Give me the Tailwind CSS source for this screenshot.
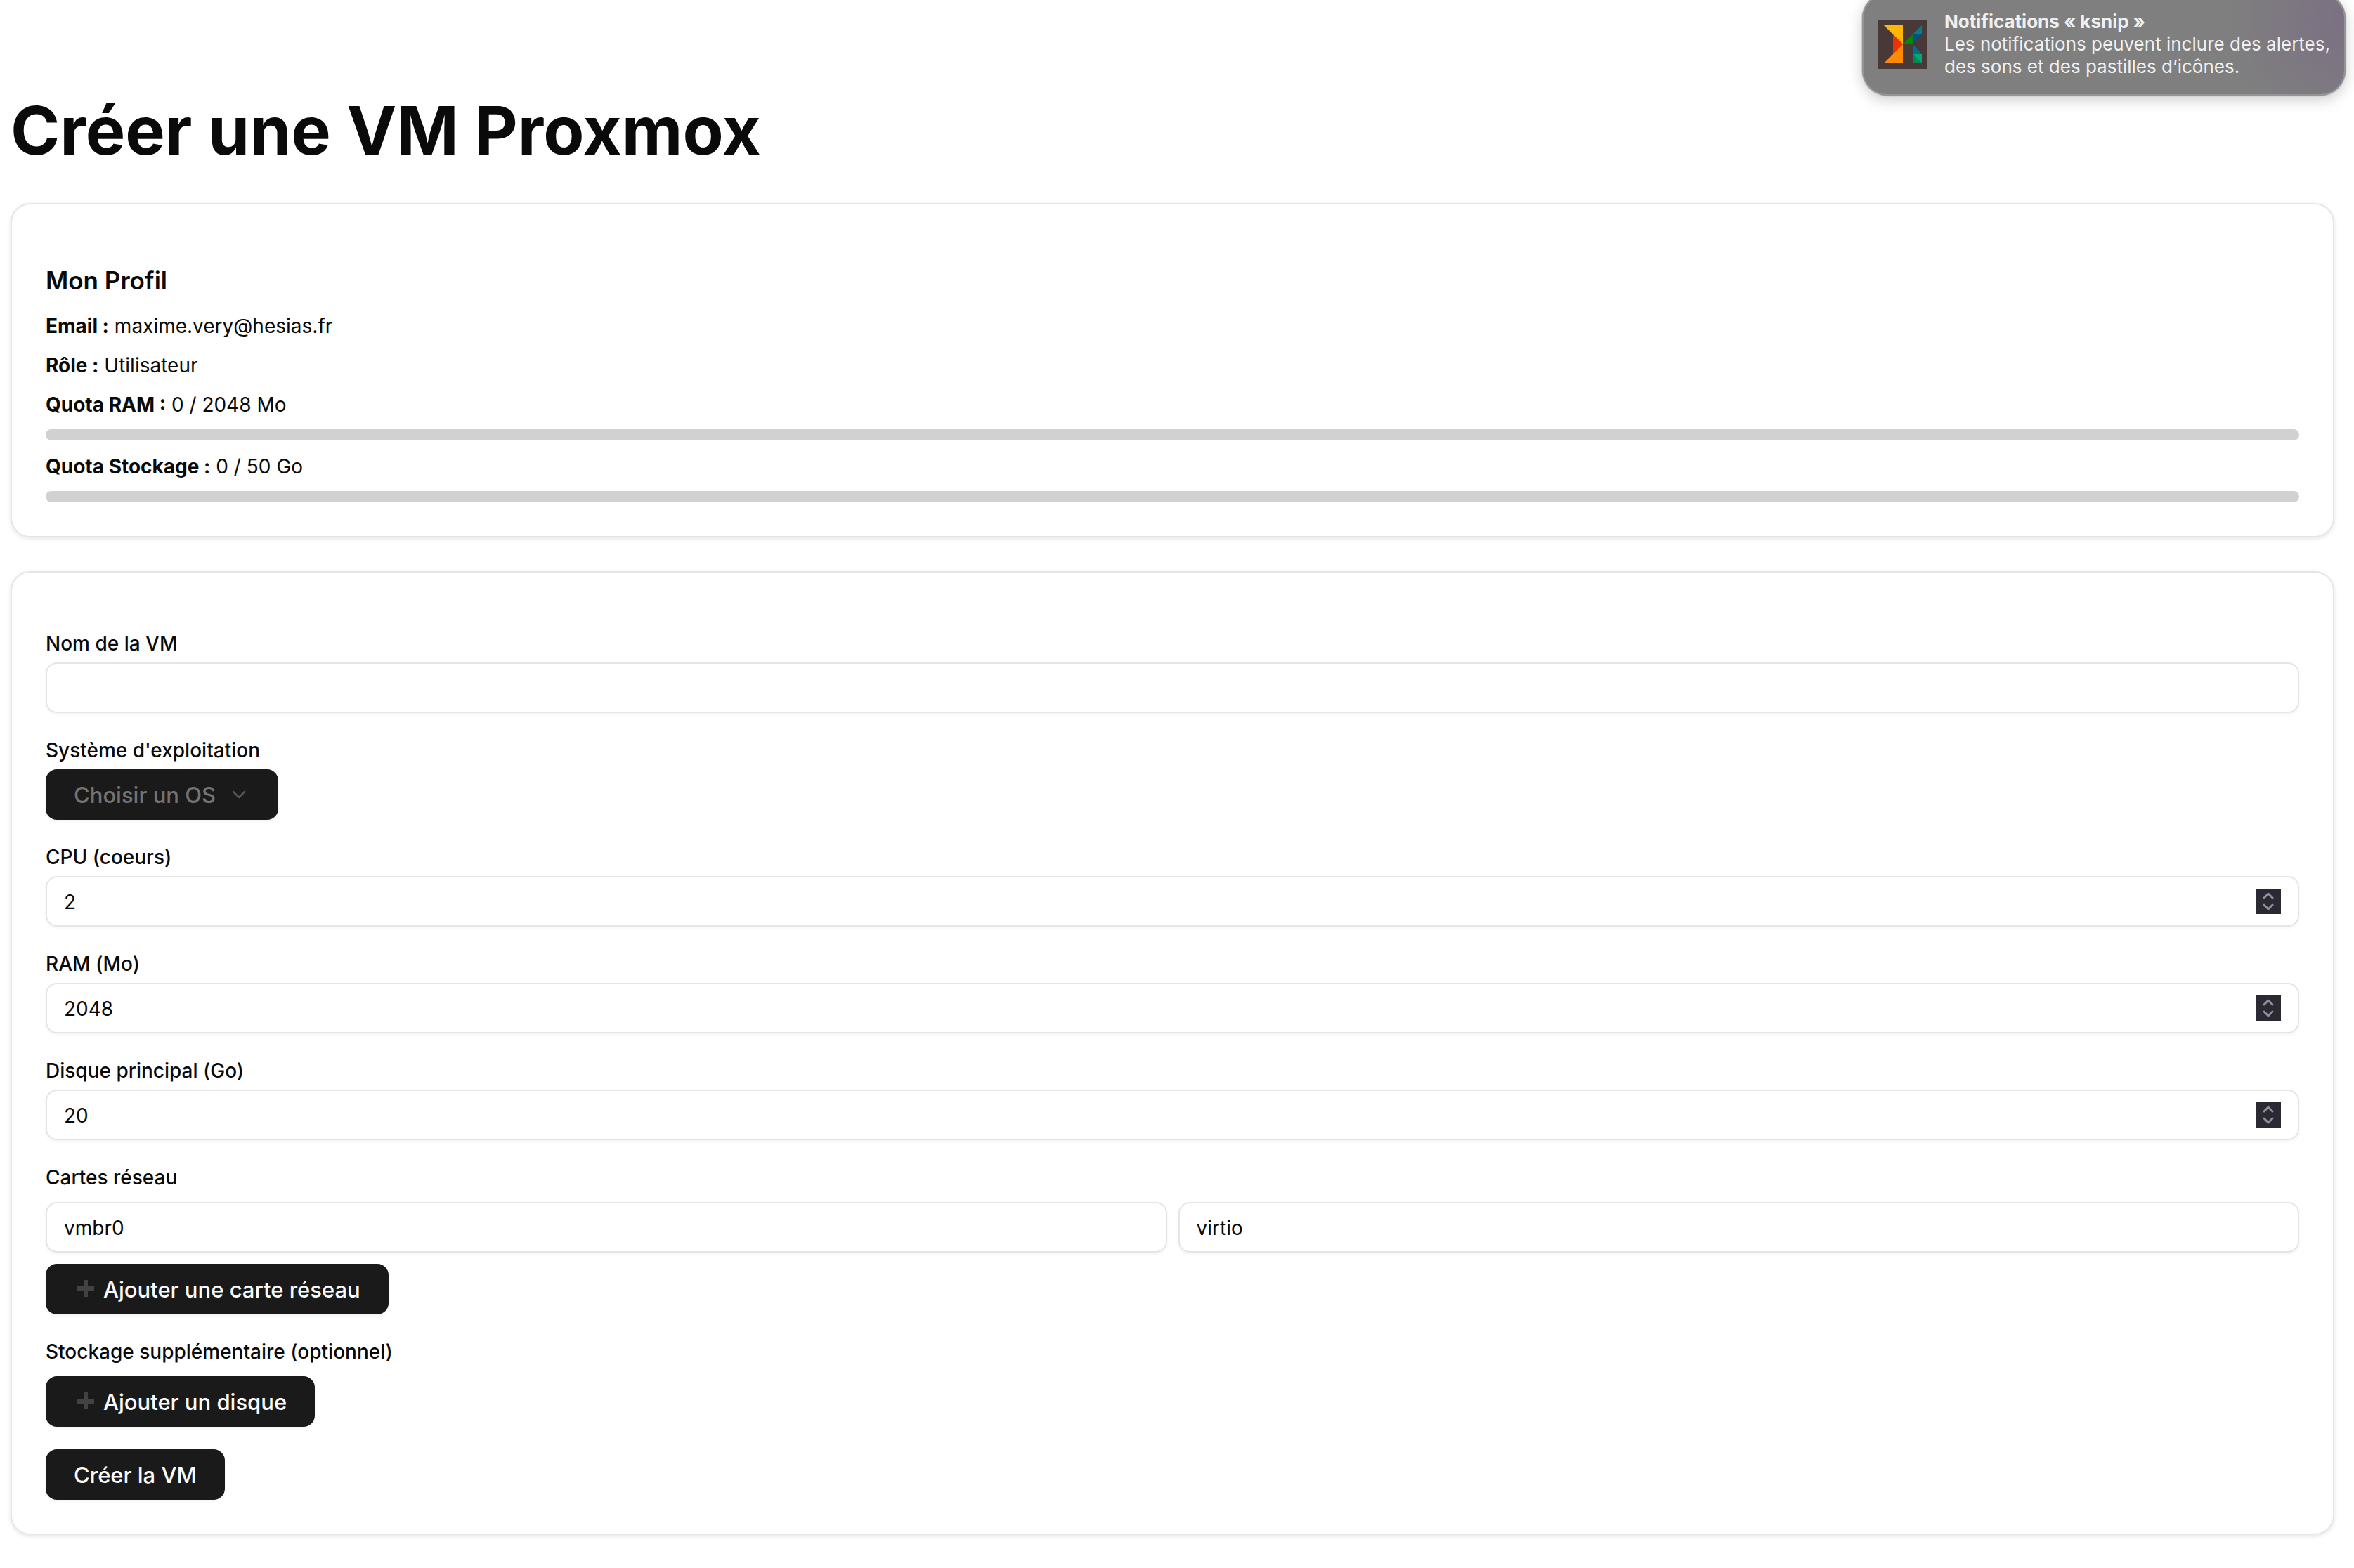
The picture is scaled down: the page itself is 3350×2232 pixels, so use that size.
<!DOCTYPE html>
<html lang="fr">
<head>
<meta charset="utf-8">
<meta name="viewport" content="width=device-width, initial-scale=1">
<title>Créer une VM Proxmox</title>
<script src="https://cdn.jsdelivr.net/npm/@tailwindcss/browser@4"></script>
</head>
<body class="bg-white font-[Inter,sans-serif] text-[28px] leading-[38px] text-neutral-950">

<!-- System notification -->
<aside class="absolute -top-2.5 right-3 flex h-[146px] w-[688px] items-center gap-6 rounded-[36px] border-2 border-[#949494] bg-[#7f7f7f] bg-[radial-gradient(circle_at_100%_25%,#7b7083,#7f7f7f_170px)] pl-[21px] shadow-[0_0_2px_rgba(0,0,0,0.5),0_6px_20px_rgba(0,0,0,0.2)]">
  <svg class="size-[70px] shrink-0" viewBox="0 0 70 70" aria-hidden="true">
    <rect width="70" height="70" fill="#483838"/>
    <path d="M8 8H35V35Z" fill="#ffb700"/>
    <path d="M21 21L35 35L21 49Z" fill="#f03000"/>
    <path d="M8 62H35V35Z" fill="#ff8a00"/>
    <path d="M35 35L49 21V35Z" fill="#008a00"/>
    <path d="M49 21L62 8V21Z" fill="#008080"/>
    <path d="M49 21H62L49 35Z" fill="#005088"/>
    <path d="M49 35L62 49H49Z" fill="#007085"/>
    <path d="M49 49H62V62Z" fill="#00a880"/>
    <path d="M49 49L62 62H49Z" fill="#008850"/>
  </svg>
  <div class="text-[26px] leading-[32px] whitespace-nowrap text-[#f0f0f0]">
    <p class="font-bold">Notifications « ksnip »</p>
    <p>Les notifications peuvent inclure des alertes,<br>des sons et des pastilles d’icônes.</p>
  </div>
</aside>

<main class="flex flex-col gap-12 pt-[130px] pr-7 pb-12 pl-[15px]">
  <h1 class="-mb-px text-[95px] leading-[112px] font-bold">Créer une VM Proxmox</h1>

  <section class="flex flex-col gap-4 rounded-[28px] border-2 border-neutral-200 px-12 pt-20 pb-12 shadow-[0_2px_6px_rgba(0,0,0,0.1)]">
    <h2 class="text-[35px] leading-[56px] font-semibold">Mon Profil</h2>
    <p class="pt-0.5"><strong class="font-bold">Email :</strong> maxime.very@hesias.fr</p>
    <p class="pt-0.5"><strong class="font-bold">Rôle :</strong> Utilisateur</p>
    <p class="pt-0.5"><strong class="font-bold">Quota RAM :</strong> 0 / 2048 Mo</p>
    <div role="progressbar" aria-label="Quota RAM" aria-valuenow="0" aria-valuemax="2048" class="h-4 rounded-full bg-[#d1d1d1]"></div>
    <p class="pt-0.5"><strong class="font-bold">Quota Stockage :</strong> 0 / 50 Go</p>
    <div role="progressbar" aria-label="Quota Stockage" aria-valuenow="0" aria-valuemax="50" class="h-4 rounded-full bg-[#d1d1d1]"></div>
  </section>

  <form class="flex flex-col gap-8 rounded-[28px] border-2 border-neutral-200 px-12 pt-20 pb-12 shadow-[0_2px_6px_rgba(0,0,0,0.1)]">
    <div class="flex flex-col gap-1.5">
      <label for="name" class="leading-[42px] font-medium">Nom de la VM</label>
      <input id="name" type="text" class="h-18 w-full rounded-2xl border-2 border-neutral-200 px-6 pt-0.5 shadow-[0_2px_4px_rgba(0,0,0,0.05)]">
    </div>

    <div class="flex flex-col items-start gap-1.5">
      <label for="os" class="leading-[42px] font-medium">Système d'exploitation</label>
      <div class="relative">
        <select id="os" class="block h-18 appearance-none rounded-2xl bg-[#1a1a1a] pt-0.5 pr-[88px] pl-10 text-[31px] font-medium text-[#737373] shadow-[0_2px_4px_rgba(0,0,0,0.05)]">
          <option>Choisir un OS</option>
        </select>
        <svg class="pointer-events-none absolute top-5 right-10 size-8" viewBox="0 0 24 24" fill="none" stroke="#545454" stroke-width="2" stroke-linecap="round" stroke-linejoin="round" aria-hidden="true"><path d="m6 9 6 6 6-6"/></svg>
      </div>
    </div>

    <div class="flex flex-col gap-1.5">
      <label for="cpu" class="leading-[42px] font-medium">CPU (coeurs)</label>
      <div class="relative">
        <input id="cpu" type="number" value="2" class="block h-18 w-full rounded-2xl border-2 border-neutral-200 px-6 pt-0.5 shadow-[0_2px_4px_rgba(0,0,0,0.05)] [appearance:textfield]">
        <svg class="pointer-events-none absolute top-[18px] right-[26px] size-9 bg-[#2b2a33]" viewBox="0 0 36 36" fill="none" stroke="#8f8f9d" stroke-width="3" stroke-linecap="round" stroke-linejoin="round" aria-hidden="true"><path d="m12 13 6-6 6 6M12 23l6 6 6-6"/></svg>
      </div>
    </div>

    <div class="flex flex-col gap-1.5">
      <label for="ram" class="leading-[42px] font-medium">RAM (Mo)</label>
      <div class="relative">
        <input id="ram" type="number" value="2048" class="block h-18 w-full rounded-2xl border-2 border-neutral-200 px-6 pt-0.5 shadow-[0_2px_4px_rgba(0,0,0,0.05)] [appearance:textfield]">
        <svg class="pointer-events-none absolute top-[18px] right-[26px] size-9 bg-[#2b2a33]" viewBox="0 0 36 36" fill="none" stroke="#8f8f9d" stroke-width="3" stroke-linecap="round" stroke-linejoin="round" aria-hidden="true"><path d="m12 13 6-6 6 6M12 23l6 6 6-6"/></svg>
      </div>
    </div>

    <div class="flex flex-col gap-1.5">
      <label for="disk" class="leading-[42px] font-medium">Disque principal (Go)</label>
      <div class="relative">
        <input id="disk" type="number" value="20" class="block h-18 w-full rounded-2xl border-2 border-neutral-200 px-6 pt-0.5 shadow-[0_2px_4px_rgba(0,0,0,0.05)] [appearance:textfield]">
        <svg class="pointer-events-none absolute top-[18px] right-[26px] size-9 bg-[#2b2a33]" viewBox="0 0 36 36" fill="none" stroke="#8f8f9d" stroke-width="3" stroke-linecap="round" stroke-linejoin="round" aria-hidden="true"><path d="m12 13 6-6 6 6M12 23l6 6 6-6"/></svg>
      </div>
    </div>

    <div class="flex flex-col items-start">
      <label for="bridge" class="mb-3.5 leading-[42px] font-medium">Cartes réseau</label>
      <div class="mb-4 grid w-full grid-cols-2 gap-4">
        <input id="bridge" type="text" value="vmbr0" class="h-18 rounded-2xl border-2 border-neutral-200 px-6 pt-0.5 shadow-[0_2px_4px_rgba(0,0,0,0.05)]">
        <input type="text" value="virtio" aria-label="Modèle de carte" class="h-18 rounded-2xl border-2 border-neutral-200 px-6 pt-0.5 shadow-[0_2px_4px_rgba(0,0,0,0.05)]">
      </div>
      <button type="button" class="flex h-18 items-center rounded-2xl bg-[#1a1a1a] px-10 pt-0.5 text-[31px] font-medium text-neutral-50 shadow-[0_2px_4px_rgba(0,0,0,0.05)]">
        <svg class="mr-2.5 size-8 shrink-0" viewBox="0 0 32 32" aria-hidden="true"><path d="M14 2h6v9h9v7h-9v8h-6v-8H5v-7h9z" fill="#424242"/></svg>
        Ajouter une carte réseau
      </button>
    </div>

    <div class="flex flex-col items-start gap-3.5">
      <h3 class="leading-[42px] font-medium">Stockage supplémentaire (optionnel)</h3>
      <button type="button" class="flex h-18 items-center rounded-2xl bg-[#1a1a1a] px-10 pt-0.5 text-[31px] font-medium text-neutral-50 shadow-[0_2px_4px_rgba(0,0,0,0.05)]">
        <svg class="mr-2.5 size-8 shrink-0" viewBox="0 0 32 32" aria-hidden="true"><path d="M14 2h6v9h9v7h-9v8h-6v-8H5v-7h9z" fill="#424242"/></svg>
        Ajouter un disque
      </button>
    </div>

    <button type="submit" class="h-18 self-start rounded-2xl bg-[#1a1a1a] px-10 pt-0.5 text-[31px] font-medium text-neutral-50 shadow-[0_2px_4px_rgba(0,0,0,0.05)]">Créer la VM</button>
  </form>
</main>
</body>
</html>
